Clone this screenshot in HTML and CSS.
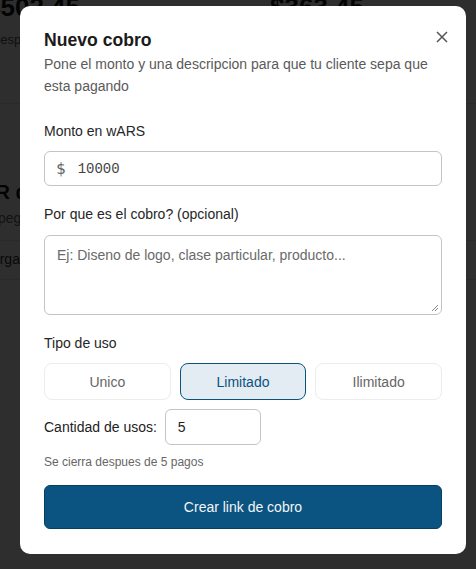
FILE: index.html
```html
<!DOCTYPE html>
<html lang="es">
<head>
<meta charset="utf-8">
<title>Nuevo cobro</title>
<link rel="stylesheet" href="styles.css">
</head>
<body>
<div class="page">
  <div class="stats">
    <div class="stat">
      <div class="stat-value">$502.45</div>
      <div class="stat-label">despues de fees</div>
    </div>
    <div class="stat">
      <div class="stat-value">$363.45</div>
      <div class="stat-label">para retirar</div>
    </div>
  </div>
  <div class="section">
    <div class="section-title">QR de cobro</div>
    <div class="section-text">Copegá este link</div>
    <div class="section-row">Descargar</div>
  </div>
</div>

<div class="overlay">
  <div class="modal">
    <button class="close" aria-label="Cerrar">
      <svg width="12" height="12" viewBox="0 0 12 12"><path d="M1 1 L11 11 M11 1 L1 11" stroke="#555" stroke-width="1.5" fill="none"/></svg>
    </button>
    <h2 class="title">Nuevo cobro</h2>
    <p class="subtitle">Pone el monto y una descripcion para que tu cliente sepa que esta pagando</p>

    <label class="label label-first">Monto en wARS</label>
    <div class="amount">
      <span class="currency">$</span>
      <span class="amount-value">10000</span>
    </div>

    <label class="label">Por que es el cobro? (opcional)</label>
    <div class="textarea">
      <span class="placeholder">Ej: Diseno de logo, clase particular, producto...</span>
      <svg class="grip" width="8" height="8" viewBox="0 0 8 8"><path d="M7 1 L1 7 M7 4 L4 7" stroke="#888" stroke-width="1"/></svg>
    </div>

    <label class="label">Tipo de uso</label>
    <div class="options">
      <div class="option">Unico</div>
      <div class="option option-active">Limitado</div>
      <div class="option">Ilimitado</div>
    </div>

    <div class="uses">
      <span class="uses-label">Cantidad de usos:</span>
      <div class="uses-input">5</div>
    </div>
    <div class="hint">Se cierra despues de 5 pagos</div>

    <button class="submit">Crear link de cobro</button>
  </div>
</div>
</body>
</html>
```

FILE: styles.css
```css
* { box-sizing: border-box; }
html, body { margin: 0; padding: 0; }
body {
  width: 476px;
  height: 569px;
  overflow: hidden;
  background: #ffffff;
  font-family: "Liberation Sans", Arial, sans-serif;
  position: relative;
}

.page {
  margin-left: -14px;
  width: 620px;
}
.stats {
  display: flex;
  border-bottom: 1px solid #e2e2e2;
  height: 104px;
}
.stat { width: 284px; flex: none; }
.stat-value {
  font-size: 26px;
  font-weight: bold;
  color: #111;
  line-height: 26px;
  margin-top: -6px;
}
.stat-label {
  margin-top: 12px;
  margin-left: 7px;
  font-size: 13px;
  color: #555;
}
.section { padding-top: 76px; }
.section-title {
  margin-left: -6px;
  font-size: 20px;
  font-weight: bold;
  color: #111;
  line-height: 24px;
}
.section-text {
  margin-left: -6px;
  font-size: 14px;
  color: #666;
  margin-top: 6px;
  padding-bottom: 14px;
  border-bottom: 1px solid #e2e2e2;
}
.section-row {
  margin-left: -26px;
  font-size: 14px;
  color: #333;
  padding: 10px 0 12px;
  border-bottom: 1px solid #e2e2e2;
}

.overlay {
  position: absolute;
  inset: 0;
  background: rgba(0, 0, 0, 0.82);
}
.modal {
  position: absolute;
  left: 20px;
  top: 6px;
  width: 446px;
  background: #ffffff;
  border-radius: 10px;
  padding: 22px 24px 25px;
  display: flex;
  flex-direction: column;
}
.close {
  position: absolute;
  right: 18px;
  top: 25px;
  width: 12px;
  height: 12px;
  padding: 0;
  border: 0;
  background: none;
  display: flex;
}
.title {
  margin: 0;
  font-size: 17.6px;
  line-height: 24px;
  font-weight: bold;
  color: #1b1b1b;
}
.subtitle {
  margin: 1px 0 0;
  font-size: 14px;
  line-height: 22px;
  color: #5a5a5a;
}
.label {
  display: block;
  font-size: 14px;
  line-height: 20px;
  color: #262626;
  margin-top: 18px;
  margin-bottom: 10px;
}
.label-first { margin-top: 24px; }
.amount {
  height: 35px;
  border: 1px solid #c4c4c4;
  border-radius: 6px;
  display: flex;
  align-items: center;
  padding-left: 11px;
}
.currency {
  font-family: "DejaVu Sans Mono", monospace;
  font-size: 16px;
  color: #666;
  margin-right: 12px;
}
.amount-value {
  font-family: "Liberation Mono", monospace;
  font-size: 14px;
  color: #444;
}
.textarea {
  height: 80px;
  margin-top: 1px;
  border: 1px solid #c4c4c4;
  border-radius: 6px;
  padding: 10px 12px;
  position: relative;
}
.placeholder {
  font-size: 14px;
  color: #6a6a6a;
  line-height: 18px;
}
.grip {
  position: absolute;
  right: 2px;
  bottom: 2px;
}
.options {
  display: grid;
  grid-template-columns: 1fr 1fr 1fr;
  gap: 9px;
  margin-top: 0;
}
.option {
  height: 37px;
  border: 1px solid #ececec;
  border-radius: 8px;
  display: flex;
  align-items: center;
  justify-content: center;
  font-size: 14px;
  color: #666;
}
.option-active {
  background: #e3ebf3;
  border-color: #0b527f;
  color: #0b5280;
}
.uses {
  display: flex;
  align-items: center;
  gap: 8px;
  margin-top: 9px;
}
.uses-label {
  font-size: 14px;
  color: #222;
}
.uses-input {
  width: 96px;
  height: 36px;
  border: 1px solid #c4c4c4;
  border-radius: 6px;
  display: flex;
  align-items: center;
  padding-left: 12px;
  font-size: 14px;
  color: #222;
}
.hint {
  margin-top: 9px;
  font-size: 12px;
  line-height: 16px;
  color: #666;
}
.submit {
  margin-top: 15px;
  height: 44px;
  border: 1px solid #063f64;
  border-radius: 6px;
  background: #0b5380;
  color: #f2f6f9;
  font-family: "Liberation Sans", Arial, sans-serif;
  font-size: 14px;
}
```
